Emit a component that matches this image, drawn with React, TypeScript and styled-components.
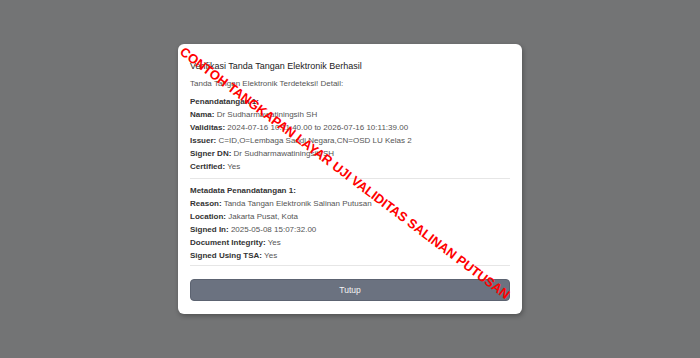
import React from "react";
import styled, { createGlobalStyle } from "styled-components";

const GlobalStyle = createGlobalStyle`
  html, body {
    margin: 0;
    padding: 0;
  }
  body {
    font-family: "Liberation Sans", Arial, sans-serif;
    background: #737475;
  }
`;

const Backdrop = styled.div`
  width: 100vw;
  height: 100vh;
  display: flex;
  align-items: center;
  justify-content: center;
  background: #737475;
  overflow: hidden;
`;

const Modal = styled.div`
  position: relative;
  width: 344px;
  box-sizing: border-box;
  padding: 14px 12px 13px 12px;
  background: #ffffff;
  border-radius: 6px;
  box-shadow: 1px 2px 5px rgba(0, 0, 0, 0.3);
`;

const Title = styled.div`
  font-size: 9px;
  line-height: 16px;
  color: #222;
  margin-bottom: 3px;
`;

const Subtitle = styled.div`
  font-size: 8px;
  line-height: 14px;
  color: #555;
  margin-bottom: 3.5px;
`;

const Section = styled.div`
  display: flex;
  flex-direction: column;
`;

const Row = styled.div`
  font-size: 8px;
  line-height: 13.1px;
  color: #555;
  white-space: nowrap;
`;

const Label = styled.span`
  font-weight: bold;
  color: #333;
`;

const Divider = styled.div<{ $top: number; $bottom: number }>`
  height: 1px;
  background: #e6e6e6;
  margin: ${(p) => p.$top}px 0 ${(p) => p.$bottom}px 0;
`;

const CloseButton = styled.button`
  display: block;
  width: 100%;
  height: 22px;
  padding: 0;
  border: 1px solid #5c6371;
  border-radius: 4px;
  background: #6b7280;
  color: #f4f4f4;
  font-family: "Liberation Sans", Arial, sans-serif;
  font-size: 8.5px;
  cursor: pointer;
`;

const Watermark = styled.div`
  position: absolute;
  left: 50%;
  top: 50%;
  transform: translate(-50%, -50%) translate(-5px, -6px) rotate(37deg);
  white-space: nowrap;
  color: #ff0000;
  font-family: "Liberation Sans", Arial, sans-serif;
  font-weight: bold;
  font-size: 13px;
  pointer-events: none;
`;

type Field = { label: string; value?: string };

const signer: Field[] = [
  { label: "Penandatangan 1:" },
  { label: "Nama:", value: "Dr Sudharmawatiningsih SH" },
  { label: "Validitas:", value: "2024-07-16 10:11:40.00 to 2026-07-16 10:11:39.00" },
  { label: "Issuer:", value: "C=ID,O=Lembaga Sandi Negara,CN=OSD LU Kelas 2" },
  { label: "Signer DN:", value: "Dr Sudharmawatiningsih SH" },
  { label: "Certified:", value: "Yes" },
];

const metadata: Field[] = [
  { label: "Metadata Penandatangan 1:" },
  { label: "Reason:", value: "Tanda Tangan Elektronik Salinan Putusan" },
  { label: "Location:", value: "Jakarta Pusat, Kota" },
  { label: "Signed In:", value: "2025-05-08 15:07:32.00" },
  { label: "Document Integrity:", value: "Yes" },
  { label: "Signed Using TSA:", value: "Yes" },
];

const Fields = ({ items }: { items: Field[] }) => (
  <Section>
    {items.map((f) => (
      <Row key={f.label}>
        <Label>{f.label}</Label>
        {f.value ? " " + f.value : null}
      </Row>
    ))}
  </Section>
);

const App: React.FC = () => {
  return (
    <>
      <GlobalStyle />
      <Backdrop>
        <Modal>
          <Title>Verifikasi Tanda Tangan Elektronik Berhasil</Title>
          <Subtitle>Tanda Tangan Elektronik Terdeteksi! Detail:</Subtitle>
          <Fields items={signer} />
          <Divider $top={4} $bottom={5} />
          <Fields items={metadata} />
          <Divider $top={3} $bottom={12.5} />
          <CloseButton>Tutup</CloseButton>
          <Watermark>CONTOH TANGKAPAN LAYAR UJI VALIDITAS SALINAN PUTUSAN</Watermark>
        </Modal>
      </Backdrop>
    </>
  );
};

export default App;
